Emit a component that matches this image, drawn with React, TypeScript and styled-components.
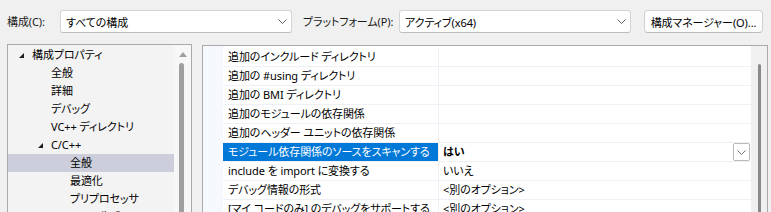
import React from "react";
import styled, { createGlobalStyle } from "styled-components";

const GlobalStyle = createGlobalStyle`
  html, body {
    margin: 0;
    padding: 0;
    background: #f0f0f0;
  }
  body {
    font-family: "Noto Sans", "Noto Sans CJK JP", sans-serif;
    font-size: 11px;
    letter-spacing: -0.1px;
    font-feature-settings: "palt";
    color: #000;
  }
`

type TreeItem = { label: string; level: number; open?: boolean; selected?: boolean }

const treeItems: TreeItem[] = [
  { label: "構成プロパティ", level: 0, open: true },
  { label: "全般", level: 1 },
  { label: "詳細", level: 1 },
  { label: "デバッグ", level: 1 },
  { label: "VC++ ディレクトリ", level: 1 },
  { label: "C/C++", level: 1, open: true },
  { label: "全般", level: 2, selected: true },
  { label: "最適化", level: 2 },
  { label: "プリプロセッサ", level: 2 },
  { label: "コード生成", level: 2 },
]

type Prop = { name: string; value?: string; selected?: boolean }

const props: Prop[] = [
  { name: "追加のインクルード ディレクトリ" },
  { name: "追加の #using ディレクトリ" },
  { name: "追加の BMI ディレクトリ" },
  { name: "追加のモジュールの依存関係" },
  { name: "追加のヘッダー ユニットの依存関係" },
  { name: "モジュール依存関係のソースをスキャンする", value: "はい", selected: true },
  { name: "include を import に変換する", value: "いいえ" },
  { name: "デバッグ情報の形式", value: "<別のオプション>" },
  { name: "[マイ コードのみ] のデバッグをサポートする", value: "<別のオプション>" },
]

const Chevron = ({ color = "#5f5f5f" }: { color?: string }) => (
  <svg width="9" height="5" viewBox="0 0 9 5">
    <path d="M0.5 0.5 L4.5 4.5 L8.5 0.5" fill="none" stroke={color} strokeWidth="1" />
  </svg>
)

const App = () => {
  return (
    <Page>
      <GlobalStyle />
      <Toolbar>
        <Label width={53}>構成(C):</Label>
        <Combo>
          <span>すべての構成</span>
          <Chevron />
        </Combo>
        <Label width={96} gap={11}>プラットフォーム(P):</Label>
        <Combo>
          <span>アクティブ(x64)</span>
          <Chevron />
        </Combo>
        <Button>構成マネージャー(O)...</Button>
      </Toolbar>

      <Main>
        <Tree>
          <TreeList>
            {treeItems.map((item, i) => (
              <TreeRow key={i} selected={item.selected}>
                <Expander level={item.level}>
                  {item.open && (
                    <svg width="5" height="5" viewBox="0 0 5 5">
                      <polygon points="5,0 5,5 0,5" fill="#1e1e1e" />
                    </svg>
                  )}
                </Expander>
                {item.label}
              </TreeRow>
            ))}
          </TreeList>
          <TreeScroll>
            <ArrowUp />
            <TreeThumb />
          </TreeScroll>
        </Tree>

        <Grid>
          <Indent />
          <Rows>
            {props.map((p, i) => (
              <Row key={i}>
                <NameCell selected={p.selected}>{p.name}</NameCell>
                <ValueCell bold={p.selected}>
                  <span>{p.value}</span>
                  {p.selected && (
                    <DropButton>
                      <Chevron color="#707070" />
                    </DropButton>
                  )}
                </ValueCell>
              </Row>
            ))}
          </Rows>
          <GridScroll>
            <GridThumb />
          </GridScroll>
        </Grid>
      </Main>
    </Page>
  )
}

const Page = styled.div`
  width: 771px;
  height: 212px;
  overflow: hidden;
`

const Toolbar = styled.div`
  display: flex;
  align-items: center;
  height: 23px;
  padding: 10px 0 0 7px;
`

const Label = styled.div<{ width: number; gap?: number }>`
  width: ${p => p.width}px;
  margin-left: ${p => p.gap ?? 0}px;
  flex-shrink: 0;
  white-space: nowrap;
  line-height: 23px;
  color: #1a1a1a;
`

const Combo = styled.div`
  box-sizing: border-box;
  width: 232px;
  height: 23px;
  display: flex;
  align-items: center;
  justify-content: space-between;
  padding: 0 4px 0 5px;
  background: #fff;
  border: 1px solid #d4d4d4;
  border-bottom-color: #bdbdbd;
  border-radius: 3px;
  white-space: nowrap;
`

const Button = styled.div`
  box-sizing: border-box;
  width: 119px;
  height: 23px;
  margin-left: 13px;
  display: flex;
  align-items: center;
  justify-content: center;
  background: #fdfdfd;
  border: 1px solid #d0d0d0;
  border-bottom-color: #bcbcbc;
  border-radius: 4px;
  white-space: nowrap;
`

const Main = styled.div`
  display: flex;
  gap: 10px;
  padding: 11px 0 0 7px;
  height: 200px;
`

const Tree = styled.div`
  box-sizing: border-box;
  width: 185px;
  display: flex;
  border: 1px solid #a9a9a9;
  border-bottom: none;
  background: #f3f3f3;
`

const TreeList = styled.div`
  flex: 1;
  padding-top: 1px;
`

const TreeRow = styled.div<{ selected?: boolean }>`
  display: flex;
  align-items: center;
  height: 18px;
  line-height: 18px;
  white-space: nowrap;
  background: ${p => (p.selected ? "#cccedb" : "transparent")};
`

const Expander = styled.span<{ level: number }>`
  display: inline-flex;
  align-items: center;
  width: 13px;
  margin-left: ${p => 11 + p.level * 19}px;
`

const TreeScroll = styled.div`
  width: 17px;
  background: #f7f7f7;
  display: flex;
  flex-direction: column;
  align-items: center;
`

const ArrowUp = styled.div`
  margin-top: 7px;
  width: 0;
  height: 0;
  border-left: 4px solid transparent;
  border-right: 4px solid transparent;
  border-bottom: 5px solid #a0a0a0;
`

const TreeThumb = styled.div`
  margin-top: 6px;
  margin-left: -2px;
  width: 5px;
  flex: 1;
  border-radius: 3px 3px 0 0;
  background: #9f9f9f;
`

const Grid = styled.div`
  box-sizing: border-box;
  width: 566px;
  margin-top: 1px;
  display: flex;
  border: 1px solid #a9a9a9;
  border-bottom: none;
  background: #fff;
`

const Indent = styled.div`
  width: 20px;
  background: #f5f8fd;
`

const Rows = styled.div`
  width: 528px;
  padding-top: 2px;
`

const Row = styled.div`
  display: flex;
  height: 18px;
  border-bottom: 1px solid #eef0f5;
`

const NameCell = styled.div<{ selected?: boolean }>`
  box-sizing: border-box;
  width: 215px;
  padding-left: 5px;
  line-height: 18px;
  white-space: nowrap;
  overflow: hidden;
  background: ${p => (p.selected ? "#0078d7" : "#fff")};
  color: ${p => (p.selected ? "#fff" : "#000")};
`

const ValueCell = styled.div<{ bold?: boolean }>`
  box-sizing: border-box;
  flex: 1;
  display: flex;
  align-items: center;
  justify-content: space-between;
  padding: 0 1px 0 4px;
  border-left: 1px solid #eef0f5;
  line-height: 18px;
  white-space: nowrap;
  font-weight: ${p => (p.bold ? 700 : 400)};
`

const DropButton = styled.div`
  box-sizing: border-box;
  width: 17px;
  height: 18px;
  display: flex;
  align-items: center;
  justify-content: center;
  background: #fff;
  border: 1px solid #b9b9b9;
  border-radius: 2px;
`

const GridScroll = styled.div`
  width: 16px;
  background: #f0f0f0;
  display: flex;
  justify-content: center;
`

const GridThumb = styled.div`
  margin-top: 18px;
  margin-left: 1px;
  width: 3px;
  border-radius: 2px 2px 0 0;
  background: #8a8a8a;
`

export default App
